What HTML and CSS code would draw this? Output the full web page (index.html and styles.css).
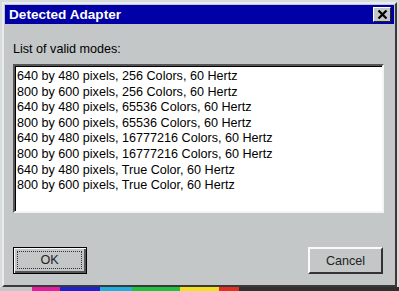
FILE: index.html
```html
<!DOCTYPE html>
<html lang="en">
<head>
    <meta charset="UTF-8">
    <title>Detected Adapter</title>
    <link rel="stylesheet" href="styles.css">
</head>
<body>
    <div class="window">
        <div class="titlebar">
            <span class="title">Detected Adapter</span>
            <button class="close-btn">
                <svg width="11" height="9" viewBox="0 0 11 9">
                    <path d="M1.5 0.5 9.5 8.5M9.5 0.5 1.5 8.5" stroke="#000" stroke-width="2.2" fill="none"/>
                </svg>
            </button>
        </div>
        <div class="content">
            <div class="label">List of valid modes:</div>
            <div class="listbox">
                <div class="item">640 by 480 pixels, 256 Colors, 60 Hertz</div>
                <div class="item">800 by 600 pixels, 256 Colors, 60 Hertz</div>
                <div class="item">640 by 480 pixels, 65536 Colors, 60 Hertz</div>
                <div class="item">800 by 600 pixels, 65536 Colors, 60 Hertz</div>
                <div class="item">640 by 480 pixels, 16777216 Colors, 60 Hertz</div>
                <div class="item">800 by 600 pixels, 16777216 Colors, 60 Hertz</div>
                <div class="item">640 by 480 pixels, True Color, 60 Hertz</div>
                <div class="item">800 by 600 pixels, True Color, 60 Hertz</div>
            </div>
            <div class="buttons">
                <button class="btn default"><span class="focus">OK</span></button>
                <button class="btn">Cancel</button>
            </div>
        </div>
    </div>
    <div class="desktop-strip"></div>
</body>
</html>
```

FILE: styles.css
```css
body {
    margin: 0;
    width: 399px;
    height: 291px;
    overflow: hidden;
    background: #d8dcdc;
    font-family: "Liberation Sans", Arial, sans-serif;
    font-size: 12.6px;
    color: #000;
}
.window {
    margin: 2px 1px 0 2px;
    width: 391px;
    height: 281px;
    background: #c3c7c7;
    border: 2px solid;
    border-color: #e8ecec #3a3a3a #3a3a3a #e8ecec;
    display: flex;
    flex-direction: column;
}
.titlebar {
    margin: 1px 1px 0 1px;
    height: 19px;
    background: #0000a6;
    display: flex;
    align-items: center;
    justify-content: space-between;
    padding: 0 3px 0 4px;
}
.title {
    color: #fff;
    font-weight: bold;
    font-size: 13.6px;
}
.close-btn {
    width: 18px;
    height: 15px;
    padding: 0;
    background: #c3c7c7;
    border: 1px solid;
    border-color: #fff #222 #222 #fff;
    display: flex;
    align-items: center;
    justify-content: center;
}
.content {
    flex: 1;
    display: flex;
    flex-direction: column;
    padding: 0 11px 0 9px;
}
.label {
    margin-top: 18px;
    height: 22px;
}
.listbox {
    height: 139px;
    background: #fff;
    border: 2px solid;
    border-color: #555 #f4f4f4 #f4f4f4 #555;
    box-shadow: inset 1px 1px 0 #000;
    padding: 3px 2px;
}
.item {
    line-height: 15.6px;
    white-space: nowrap;
}
.buttons {
    margin-top: 34px;
    display: flex;
    justify-content: space-between;
}
.btn {
    width: 75px;
    height: 27px;
    padding: 0;
    background: #c3c7c7;
    font-family: "Liberation Sans", Arial, sans-serif;
    font-size: 12.6px;
    color: #222;
    border: 2px solid;
    border-color: #fafafa #333 #333 #fafafa;
    margin-right: 1px;
}
.btn.default {
    width: 74px;
    border: 1px solid #000;
    box-shadow: inset 1px 1px 0 #fafafa, inset -2px -2px 0 #555;
    padding: 3px 4px 4px 3px;
    margin-right: 0;
}
.focus {
    display: flex;
    align-items: center;
    justify-content: center;
    height: 100%;
    border: 1px dotted #333;
    box-sizing: border-box;
}
.desktop-strip {
    height: 4px;
    background: linear-gradient(90deg, #c3c7c7 0 8%, #e020a0 8% 15%, #2020d0 15% 25%, #20b0e0 25% 33%, #20c040 33% 45%, #f0e020 45% 55%, #e03020 55% 60%, #303030 60% 100%);
}
```
